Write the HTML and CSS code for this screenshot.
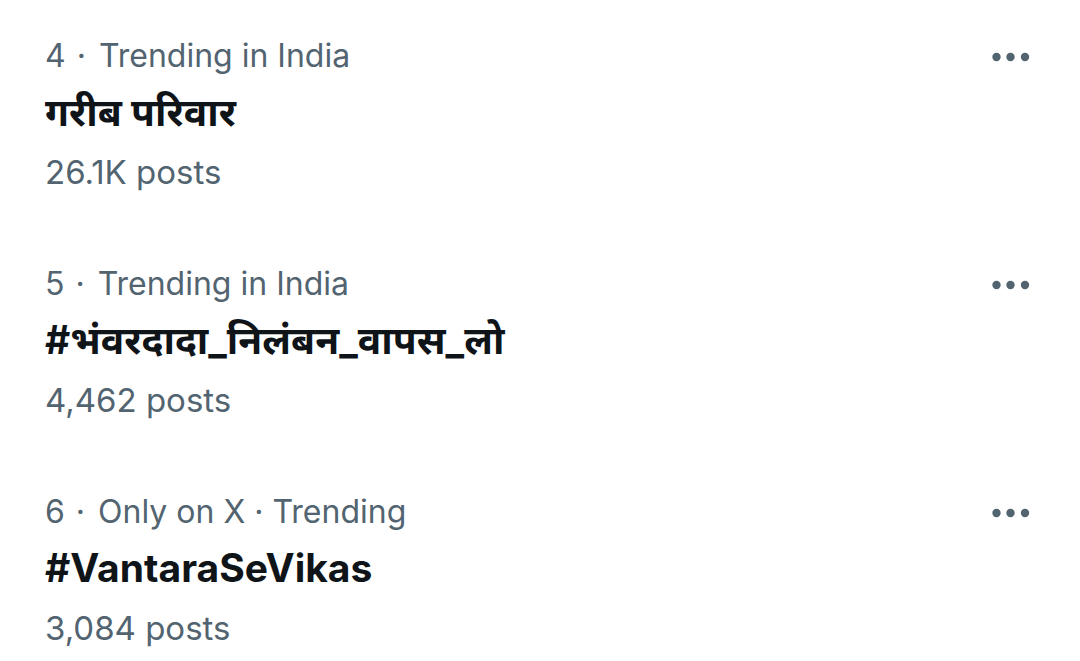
FILE: index.html
```html
<!DOCTYPE html>
<html>
<head>
<meta charset="utf-8">
<link rel="stylesheet" href="styles.css">
</head>
<body>
<div class="list">
  <div class="trend">
    <div class="main">
      <div class="meta">4<span class="sep">·</span>Trending in India</div>
      <div class="title">गरीब परिवार</div>
      <div class="count">26.1K posts</div>
    </div>
    <div class="more"><svg width="38" height="10" viewBox="0 0 38 10"><circle cx="4.5" cy="5" r="4.2"/><circle cx="18.5" cy="5" r="4.2"/><circle cx="33" cy="5" r="4.2"/></svg></div>
  </div>
  <div class="trend">
    <div class="main">
      <div class="meta">5<span class="sep">·</span>Trending in India</div>
      <div class="title">#भंवरदादा_निलंबन_वापस_लो</div>
      <div class="count">4,462 posts</div>
    </div>
    <div class="more"><svg width="38" height="10" viewBox="0 0 38 10"><circle cx="4.5" cy="5" r="4.2"/><circle cx="18.5" cy="5" r="4.2"/><circle cx="33" cy="5" r="4.2"/></svg></div>
  </div>
  <div class="trend">
    <div class="main">
      <div class="meta">6<span class="sep">·</span>Only on X · Trending</div>
      <div class="title">#VantaraSeVikas</div>
      <div class="count">3,084 posts</div>
    </div>
    <div class="more"><svg width="38" height="10" viewBox="0 0 38 10"><circle cx="4.5" cy="5" r="4.2"/><circle cx="18.5" cy="5" r="4.2"/><circle cx="33" cy="5" r="4.2"/></svg></div>
  </div>
</div>
</body>
</html>
```
FILE: styles.css
```css
html, body {
  margin: 0;
  padding: 0;
  background: #ffffff;
}
body {
  font-family: Inter, "Noto Sans", sans-serif;
  width: 1080px;
  height: 661px;
  overflow: hidden;
}
.list {
  display: flex;
  flex-direction: column;
  gap: 60px;
  padding: 32px 0 0 45px;
}
.trend {
  display: flex;
  justify-content: space-between;
  align-items: flex-start;
  padding-right: 50px;
}
.main {
  display: flex;
  flex-direction: column;
}
.meta {
  height: 48px;
  line-height: 48px;
  font-size: 32px;
  color: #536471;
}
.sep {
  margin: 0 13px 0 11px;
}
.title {
  height: 64px;
  line-height: 64px;
  font-size: 39px;
  font-weight: 700;
  color: #0f1419;
}
.count {
  height: 56px;
  line-height: 56px;
  font-size: 33px;
  color: #536471;
}
.more {
  margin-top: 20px;
  fill: #536471;
  line-height: 0;
}
```
